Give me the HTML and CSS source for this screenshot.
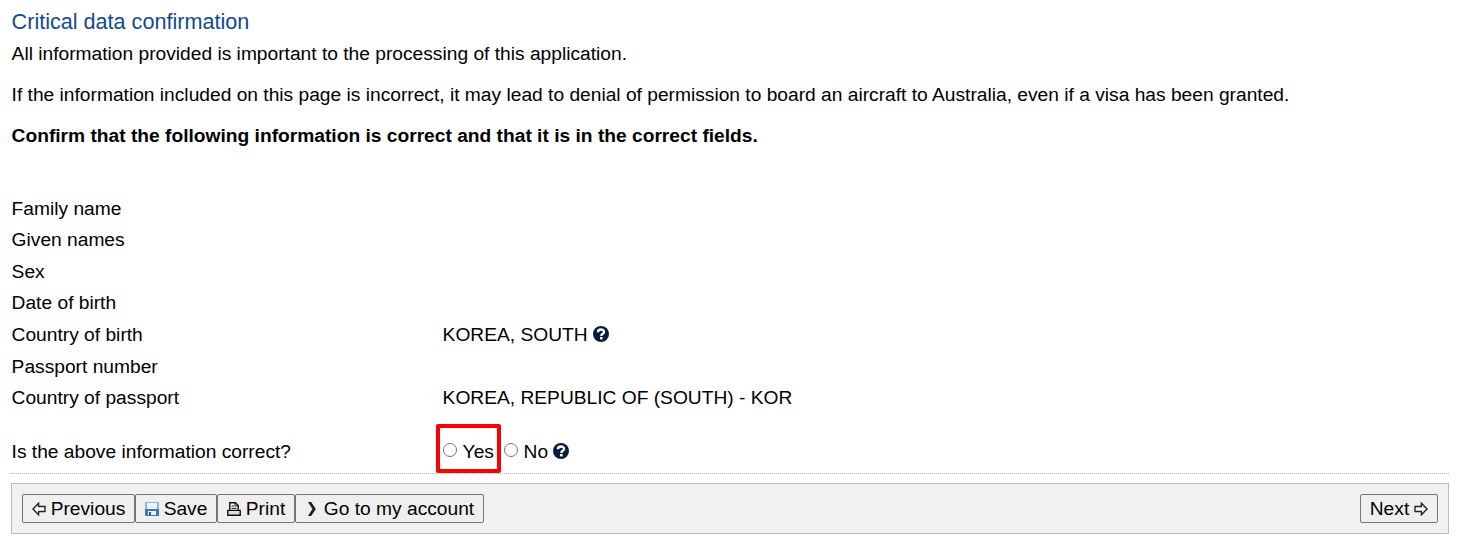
FILE: index.html
```html
<!DOCTYPE html>
<html lang="en">
<head>
<meta charset="UTF-8" />
<meta name="viewport" content="width=device-width, initial-scale=1" />
<title>Critical data confirmation</title>
<link rel="stylesheet" href="styles.css">
</head>
<body>
  <form class="page">
    <h2>Critical data confirmation</h2>
    <p>All information provided is important to the processing of this application.</p>
    <p>If the information included on this page is incorrect, it may lead to denial of permission to board an aircraft to Australia, even if a visa has been granted.</p>
    <p class="confirm">Confirm that the following information is correct and that it is in the correct fields.</p>

    <div class="details">
      <div class="row"><span>Family name</span></div>
      <div class="row"><span>Given names</span></div>
      <div class="row"><span>Sex</span></div>
      <div class="row"><span>Date of birth</span></div>
      <div class="row">
        <span>Country of birth</span>
        <span class="value">KOREA, SOUTH
          <svg class="help" viewBox="0 0 16 16"><circle cx="8" cy="8" r="8" fill="#051d3d"/><path d="M4.9 6.3C5 2.6 11.2 2.7 11 6C10.9 7.9 8.3 7.8 8.3 9.9" fill="none" stroke="#fff" stroke-width="2.4"/><rect x="7" y="11" width="2.6" height="2.4" fill="#fff"/></svg>
        </span>
      </div>
      <div class="row"><span>Passport number</span></div>
      <div class="row"><span>Country of passport</span><span class="value">KOREA, REPUBLIC OF (SOUTH) - KOR</span></div>
    </div>

    <div class="row question">
      <span class="question-text">Is the above information correct?</span>
      <div class="answers">
        <label class="marked"><input type="radio" name="correct" value="yes" />Yes</label>
        <label class="answer-no"><input type="radio" name="correct" value="no" />No
          <svg class="help" viewBox="0 0 16 16"><circle cx="8" cy="8" r="8" fill="#051d3d"/><path d="M4.9 6.3C5 2.6 11.2 2.7 11 6C10.9 7.9 8.3 7.8 8.3 9.9" fill="none" stroke="#fff" stroke-width="2.4"/><rect x="7" y="11" width="2.6" height="2.4" fill="#fff"/></svg>
        </label>
      </div>
    </div>

    <div class="toolbar">
      <button type="button" class="btn-previous">
        <svg class="icon" viewBox="0 0 14 14"><path d="M1 7L6.6 1.2V4.5H13V9.5H6.6V12.8Z" fill="#fff" stroke="#222" stroke-width="1.4"/></svg>Previous
      </button>
      <button type="button" class="btn-save">
        <svg class="icon" viewBox="0 0 14 14"><path d="M0 0H14V14H1L0 13Z" fill="#3f77ac"/><path d="M0 0H14V7H0Z" fill="#82b8e2"/><path d="M2 1H12V7H2Z" fill="#e8f4fc"/><path d="M3 9H11V13H3Z" fill="#eef2f5"/><path d="M4 10H6V13H4Z" fill="#28527e"/></svg>Save
      </button>
      <button type="button" class="btn-print">
        <svg class="icon" viewBox="0 0 14 14"><path d="M.8 8.4H13.2V13.3H.8Z" fill="#ddd" stroke="#111" stroke-width="1.4"/><path d="M2.8 8.4V.7H8.4L11.2 3.5V8.4Z" fill="#fff" stroke="#111" stroke-width="1.4"/><path d="M8 1V4H11M4.5 4H7M4.5 6.3H9.5" fill="none" stroke="#111"/></svg>Print
      </button>
      <button type="button" class="btn-account">
        <svg class="icon" viewBox="0 0 14 14"><path d="M3 0H6.2L10.8 7L6.2 14H3L7.4 7Z" fill="#222"/></svg>Go to my account
      </button>
      <button type="button" class="btn-next">
        Next<svg class="icon" viewBox="0 0 14 14"><path d="M13 7L7.4 1.2V4.5H1V9.5H7.4V12.8Z" fill="#fff" stroke="#222" stroke-width="1.4"/></svg>
      </button>
    </div>
  </form>
</body>
</html>
```
FILE: styles.css
```css
* { box-sizing: border-box; }
body { margin: 0; background: #fff; color: #000; font-family: "Liberation Sans", Arial, sans-serif; font-size: 19.2px; line-height: 22px; }
.page { padding: 10px 15px 0 11px; }
h2 { margin: 0 0 10px; padding-left: 0.6px; color: #134a8e; font-size: 21.6px; font-weight: normal; line-height: 23px; }
p { margin: 0 0 19px; padding-left: 0.6px; white-space: nowrap; }
.confirm { font-weight: bold; }
.details { height: 247.5px; padding-top: 27px; }
.row { display: grid; grid-template-columns: 431px 1fr; align-items: center; height: 31.55px; padding-left: 0.6px; }
.value { display: flex; align-items: center; gap: 5px; }
.help { width: 16px; height: 16px; margin-bottom: 1px; }
.question { height: 60px; align-items: end; border-bottom: 1px dotted #b4b4bc; }
.question-text { padding-bottom: 10px; }
.answers { display: flex; margin-left: -7px; }
.answers label { display: flex; align-items: center; height: 49px; padding-top: 7px; }
.answers .marked { width: 65px; padding-left: 3px; border: 4px solid #f00; border-radius: 2px; }
input { width: 14px; height: 14px; margin: 0 6px 3px 0; }
.answer-no { margin-left: 3px; }
.answer-no .help { margin-left: 5px; }
.toolbar { display: flex; height: 51px; margin-top: 9px; padding: 10px; background: #f1f1f1; border: 1px solid #b8b8c6; }
button { display: flex; align-items: center; justify-content: center; gap: 5px; height: 29px; padding: 1px 0 0; color: #000; background: #efefef; border: 1px solid #767676; border-radius: 2px; font: inherit; line-height: 23px; white-space: nowrap; }
.icon { width: 14px; height: 14px; flex: none; }
.btn-previous { width: 113px; }
.btn-save { width: 82px; }
.btn-print { width: 78px; }
.btn-account { width: 189px; }
.btn-next { width: 78px; margin-left: auto; }
```
